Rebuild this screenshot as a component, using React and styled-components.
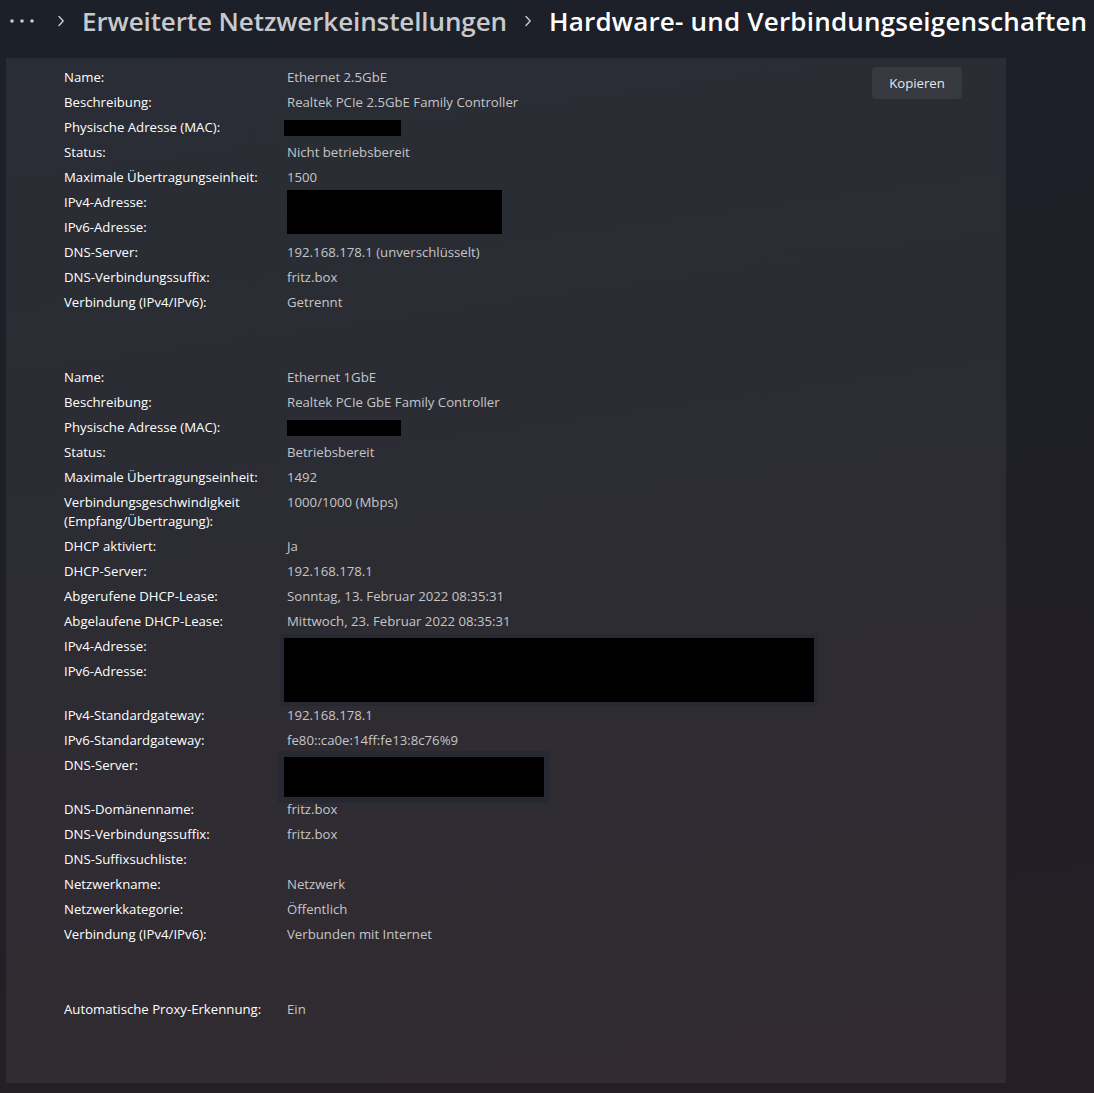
import React from 'react'
import styled, { createGlobalStyle } from 'styled-components'

const GlobalStyle = createGlobalStyle`
html, body {
    margin: 0;
    padding: 0;
}
body {
    min-height: 1093px;
    background: linear-gradient(172deg, #1c2029 0%, #1f1f27 45%, #261e25 100%);
    font-family: "Open Sans", "Noto Sans", sans-serif;
    color: #fff;
    overflow: hidden;
}
`

const first = [
    { label: 'Name:', value: 'Ethernet 2.5GbE' },
    { label: 'Beschreibung:', value: 'Realtek PCIe 2.5GbE Family Controller' },
    { label: 'Physische Adresse (MAC):', box: { w: 117, h: 16, dx: -3 } },
    { label: 'Status:', value: 'Nicht betriebsbereit' },
    { label: 'Maximale Übertragungseinheit:', value: '1500' },
    { labels: ['IPv4-Adresse:', 'IPv6-Adresse:'], box: { w: 215, h: 44, dy: -3, top: true } },
    { label: 'DNS-Server:', value: '192.168.178.1 (unverschlüsselt)' },
    { label: 'DNS-Verbindungssuffix:', value: 'fritz.box' },
    { label: 'Verbindung (IPv4/IPv6):', value: 'Getrennt' },
]

const second = [
    { label: 'Name:', value: 'Ethernet 1GbE' },
    { label: 'Beschreibung:', value: 'Realtek PCIe GbE Family Controller' },
    { label: 'Physische Adresse (MAC):', box: { w: 114, h: 16 } },
    { label: 'Status:', value: 'Betriebsbereit' },
    { label: 'Maximale Übertragungseinheit:', value: '1492' },
    { label: 'Verbindungsgeschwindigkeit (Empfang/Übertragung):', value: '1000/1000 (Mbps)', wrap: true },
    { label: 'DHCP aktiviert:', value: 'Ja' },
    { label: 'DHCP-Server:', value: '192.168.178.1' },
    { label: 'Abgerufene DHCP-Lease:', value: 'Sonntag, 13. Februar 2022 08:35:31' },
    { label: 'Abgelaufene DHCP-Lease:', value: 'Mittwoch, 23. Februar 2022 08:35:31' },
    { labels: ['IPv4-Adresse:', 'IPv6-Adresse:'], box: { w: 530, h: 64, frame: 4, dx: -7, dy: -3, db: -6, top: true } },
    { label: 'IPv4-Standardgateway:', value: '192.168.178.1' },
    { label: 'IPv6-Standardgateway:', value: 'fe80::ca0e:14ff:fe13:8c76%9' },
    { label: 'DNS-Server:', box: { w: 260, h: 40, frame: 6, dx: -9, dy: -5, db: -9, top: true } },
    { label: 'DNS-Domänenname:', value: 'fritz.box' },
    { label: 'DNS-Verbindungssuffix:', value: 'fritz.box' },
    { label: 'DNS-Suffixsuchliste:', value: '' },
    { label: 'Netzwerkname:', value: 'Netzwerk' },
    { label: 'Netzwerkkategorie:', value: 'Öffentlich' },
    { label: 'Verbindung (IPv4/IPv6):', value: 'Verbunden mit Internet' },
]

const proxy = [
    { label: 'Automatische Proxy-Erkennung:', value: 'Ein' },
]

function Dots() {
    return (
        <svg width="26" height="6" viewBox="0 0 26 6">
            <circle cx="3" cy="3" r="1.8" fill="#c9cacd" />
            <circle cx="13" cy="3" r="1.8" fill="#c9cacd" />
            <circle cx="23" cy="3" r="1.8" fill="#c9cacd" />
        </svg>
    )
}

function Chevron() {
    return (
        <svg width="8" height="12" viewBox="0 0 8 12">
            <path d="M2 1.5 L6.2 6 L2 10.5" fill="none" stroke="#c9cacd" strokeWidth="1.4" strokeLinecap="round" strokeLinejoin="round" />
        </svg>
    )
}

function Row({ item }) {
    const labels = item.labels || [item.label]
    const b = item.box
    return (
        <RowStyle>
            <LabelStack>
                {labels.map((l) => (
                    <Label key={l} $wrap={item.wrap}>{l}</Label>
                ))}
            </LabelStack>
            {b ? (
                <Redaction
                    $w={b.w}
                    $h={b.h}
                    $frame={b.frame || 0}
                    $dx={b.dx || 0}
                    $dy={b.dy || 0}
                    $db={b.db || 0}
                    $top={b.top}
                />
            ) : (
                <Value>{item.value}</Value>
            )}
        </RowStyle>
    )
}

function Section({ items }) {
    return (
        <SectionStyle>
            {items.map((item, i) => (
                <Row key={i} item={item} />
            ))}
        </SectionStyle>
    )
}

export default function App() {
    return (
        <React.Fragment>
            <GlobalStyle />
            <Page>
                <Breadcrumb>
                    <DotsWrap><Dots /></DotsWrap>
                    <Chevron />
                    <Crumb>Erweiterte Netzwerkeinstellungen</Crumb>
                    <Chevron />
                    <Crumb $current>Hardware- und Verbindungseigenschaften</Crumb>
                </Breadcrumb>
                <Panel>
                    <Details>
                        <Section items={first} />
                        <Section items={second} />
                        <Section items={proxy} />
                    </Details>
                    <CopyButton>Kopieren</CopyButton>
                </Panel>
            </Page>
        </React.Fragment>
    )
}

const Page = styled.div`
display: flex;
flex-direction: column;
`

const Breadcrumb = styled.header`
display: flex;
flex-direction: row;
align-items: center;
gap: 17px;
height: 42px;
padding: 0 0 0 9px;
margin-bottom: 16px;
white-space: nowrap;
svg {
    flex-shrink: 0;
}
`

const DotsWrap = styled.span`
display: flex;
align-items: center;
margin-right: 5px;
`

const Crumb = styled.span`
font-family: "Open Sans", "Noto Sans", sans-serif;
font-size: 26px;
font-weight: 600;
letter-spacing: ${(props) => (props.$current ? '0.2px' : '-0.1px')};
color: ${(props) => (props.$current ? '#ffffff' : '#c8c9cc')};
line-height: 36px;
`

const Panel = styled.section`
display: flex;
flex-direction: row;
align-items: flex-start;
width: 1000px;
box-sizing: border-box;
margin-left: 6px;
padding: 7px 44px 61px 58px;
background: rgba(255, 255, 255, 0.057);
`

const Details = styled.div`
display: flex;
flex-direction: column;
gap: 50px;
flex: 1;
`

const SectionStyle = styled.div`
display: flex;
flex-direction: column;
`

const RowStyle = styled.div`
display: grid;
grid-template-columns: 223px 1fr;
align-items: center;
padding: 3px 0;
font-size: 13.2px;
line-height: 19px;
`

const LabelStack = styled.div`
display: flex;
flex-direction: column;
gap: 6px;
align-self: start;
`

const Label = styled.span`
color: #ffffff;
max-width: ${(props) => (props.$wrap ? '190px' : 'none')};
white-space: ${(props) => (props.$wrap ? 'normal' : 'nowrap')};
`

const Value = styled.span`
color: #c5c5c7;
align-self: start;
white-space: nowrap;
min-height: 19px;
`

const Redaction = styled.div`
width: ${(props) => props.$w}px;
height: ${(props) => props.$h}px;
background: #000;
border: ${(props) => props.$frame}px solid #262932;
margin: ${(props) => props.$dy}px 0 ${(props) => props.$db}px ${(props) => props.$dx}px;
align-self: ${(props) => (props.$top ? 'start' : 'center')};
`

const CopyButton = styled.button`
margin-top: 2px;
width: 90px;
height: 32px;
border: none;
border-radius: 4px;
background: #373940;
color: #e6e6e8;
font-family: "Open Sans", "Noto Sans", sans-serif;
font-size: 13.2px;
cursor: pointer;
flex-shrink: 0;
`
